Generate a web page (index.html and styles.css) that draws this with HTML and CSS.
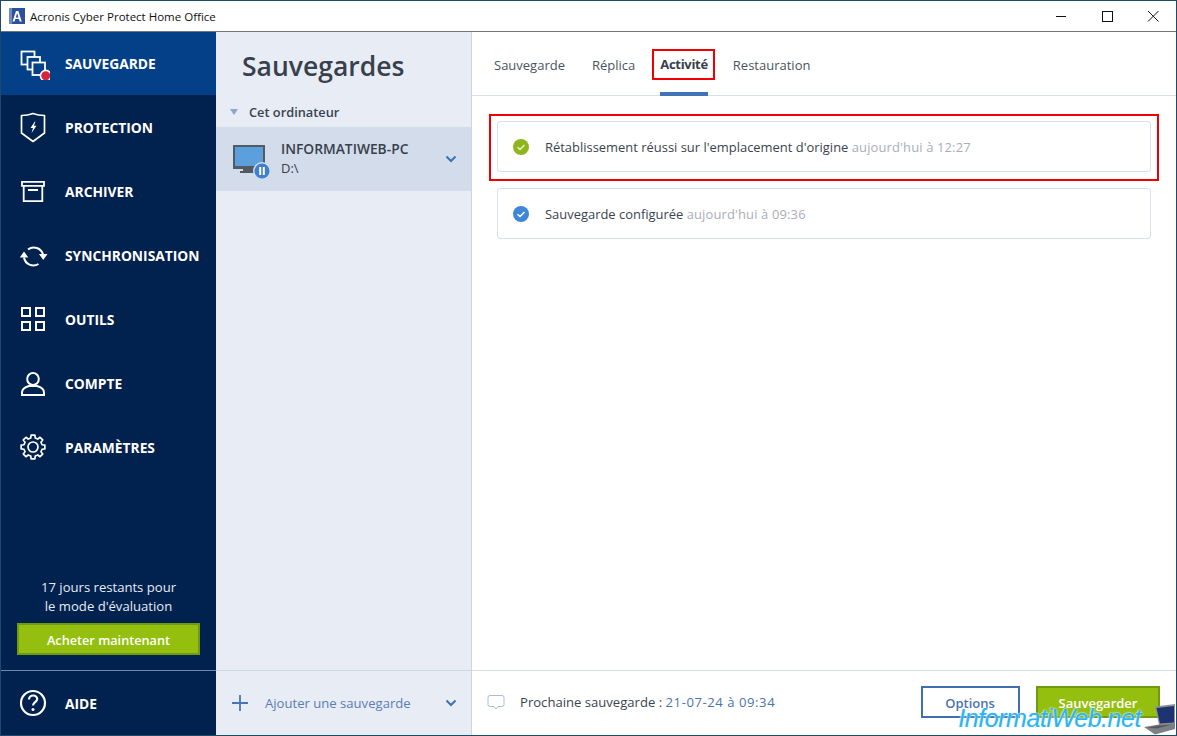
FILE: index.html
```html
<!DOCTYPE html>
<html lang="fr">
<head>
<meta charset="utf-8">
<title>Acronis Cyber Protect Home Office</title>
<link rel="stylesheet" href="styles.css">
</head>
<body>
<div class="window">
  <header class="titlebar">
    <svg class="app-logo" width="16" height="16" viewBox="0 0 16 16"><rect width="16" height="16" fill="#2c4f9e"/><rect x="0" y="0" width="3" height="16" fill="#6f8cc9"/><path d="M3.500 13.500 7 3h2.400l3.300 10.500h-2l-.7-2.400H6.300l-.7 2.400zM6.800 9.500h2.700L8.200 5z" fill="#fff"/></svg>
    <span class="app-title">Acronis Cyber Protect Home Office</span>
    <div class="win-controls">
      <svg class="win-btn" width="46" height="30" viewBox="0 0 46 30"><path d="M18 15.500h10" stroke="#111" fill="none"/></svg>
      <svg class="win-btn" width="46" height="30" viewBox="0 0 46 30"><rect x="18.500" y="10.500" width="10" height="10" stroke="#111" fill="none"/></svg>
      <svg class="win-btn" width="46" height="30" viewBox="0 0 46 30"><path d="M18 10l10.500 10.500M28.500 10 18 20.500" stroke="#111" fill="none"/></svg>
    </div>
  </header>
  <div class="body">
    <nav class="sidebar">
      <a class="nav-item active">
        <svg class="nav-icon" width="34" height="34" viewBox="0 0 34 34" fill="#034087" stroke="#fff" stroke-width="1.800"><rect x="5.500" y="5.500" width="13" height="13"/><rect x="11.500" y="11" width="12.500" height="12.500"/><rect x="16.500" y="16.500" width="12.500" height="12.500"/><circle cx="29.700" cy="29.700" r="5.300" fill="#d6263f" stroke="#fff" stroke-width="1.600"/></svg>
        <span>SAUVEGARDE</span>
      </a>
      <a class="nav-item">
        <svg class="nav-icon" width="34" height="34" viewBox="0 0 34 34" fill="none" stroke="#fff" stroke-width="1.700"><path d="M5.500 5.500c4.500 0 8.500-.8 11.500-2 3 1.200 7 2 11.500 2v17.500L17 31.500 5.500 23z" stroke-linejoin="round"/><path d="M18.800 11.500 14.500 18h2.500l-1.500 5 5-7.200h-2.600l1.500-4.300z" fill="#fff" stroke="none"/></svg>
        <span>PROTECTION</span>
      </a>
      <a class="nav-item">
        <svg class="nav-icon" width="34" height="34" viewBox="0 0 34 34" fill="none" stroke="#fff" stroke-width="1.800"><path d="M6 7.900h22v4H6zM7.700 11.900v15.200h18.600V11.900M12 16h10"/></svg>
        <span>ARCHIVER</span>
      </a>
      <a class="nav-item">
        <svg class="nav-icon" width="34" height="34" viewBox="0 0 34 34" fill="none" stroke="#fff" stroke-width="2"><path d="M12 11.500A9.500 9.500 0 0 1 27 16.500"/><path d="M8 19.500A9.500 9.500 0 0 0 22.500 26"/><path d="M23 16h8.500l-4.250 6zM3.800 19.500h8.500L8 13.500z" fill="#fff" stroke="none"/></svg>
        <span>SYNCHRONISATION</span>
      </a>
      <a class="nav-item">
        <svg class="nav-icon" width="34" height="34" viewBox="0 0 34 34" fill="none" stroke="#fff" stroke-width="2"><rect x="6" y="6" width="8" height="8"/><rect x="20" y="6" width="8" height="8"/><rect x="6" y="20" width="8" height="8"/><rect x="20" y="20" width="8" height="8"/></svg>
        <span>OUTILS</span>
      </a>
      <a class="nav-item">
        <svg class="nav-icon" width="34" height="34" viewBox="0 0 34 34" fill="none" stroke="#fff" stroke-width="2"><ellipse cx="17" cy="13" rx="5.800" ry="6"/><path d="M6 29v-2.500c0-3 3.500-5.500 7-6.500h8c3.500 1 7 3.500 7 6.500V29z"/></svg>
        <span>COMPTE</span>
      </a>
      <a class="nav-item">
        <svg class="nav-icon" width="34" height="34" viewBox="0 0 34 34" fill="none" stroke="#fff" stroke-width="1.700" stroke-linejoin="round"><path d="M14.750 7.980 15.120 5.150H18.880L19.250 7.980 21.790 9.030 24.050 7.290 26.710 9.950 24.970 12.210 26.020 14.750 28.850 15.120V18.880L26.020 19.250 24.970 21.790 26.710 24.050 24.050 26.710 21.790 24.970 19.250 26.020 18.880 28.850H15.120L14.750 26.020 12.210 24.970 9.950 26.710 7.290 24.050 9.030 21.790 7.980 19.250 5.150 18.880V15.120L7.980 14.750 9.030 12.210 7.290 9.950 9.950 7.290 12.210 9.030z"/><circle cx="17" cy="17" r="5"/></svg>
        <span>PARAMÈTRES</span>
      </a>
      <div class="trial">
        <p class="trial-text">17 jours restants pour<br>le mode d'évaluation</p>
        <button class="buy">Acheter maintenant</button>
      </div>
      <a class="nav-item help">
        <svg class="nav-icon" width="34" height="34" viewBox="0 0 34 34" fill="none" stroke="#fff" stroke-width="2.200"><circle cx="17" cy="17" r="12"/><path d="M13 13.500c0-2.500 2-4 4.200-4s4 1.500 4 3.600c0 3-4.200 3.200-4.200 6.400"/><circle cx="17" cy="23.500" r="1.500" fill="#fff" stroke="none"/></svg>
        <span>AIDE</span>
      </a>
    </nav>
    <section class="panel">
      <h1 class="panel-title">Sauvegardes</h1>
      <div class="group"><i class="caret"></i>Cet ordinateur</div>
      <div class="backup-row">
        <svg class="pc" width="38" height="38" viewBox="0 0 38 38"><rect x="1" y="2" width="32" height="24" fill="#545a62"/><rect x="3" y="4" width="28" height="19" fill="#5b9fdc"/><rect x="11" y="26" width="12" height="2" fill="#545a62"/><rect x="8" y="28" width="18" height="2" fill="#545a62"/><circle cx="30" cy="28" r="9" fill="#d2dcea"/><circle cx="30" cy="28" r="7.500" fill="#3f80d0"/><rect x="27.200" y="24" width="2" height="8" fill="#fff"/><rect x="30.800" y="24" width="2" height="8" fill="#fff"/></svg>
        <div class="backup-text">
          <div class="backup-name">INFORMATIWEB-PC</div>
          <div class="backup-path">D:\</div>
        </div>
        <svg class="chev" width="12" height="8" viewBox="0 0 12 8"><path d="M1.500 1.500 6 6l4.500-4.500" fill="none" stroke="#3f6fb5" stroke-width="2"/></svg>
      </div>
      <div class="panel-foot">
        <svg class="plus" width="16" height="16" viewBox="0 0 16 16"><path d="M8 0v16M0 8h16" stroke="#4a74b8" stroke-width="1.800"/></svg>
        <span class="add-label">Ajouter une sauvegarde</span>
        <svg class="chev" width="12" height="8" viewBox="0 0 12 8"><path d="M1.500 1.500 6 6l4.500-4.500" fill="none" stroke="#3f6fb5" stroke-width="2"/></svg>
      </div>
    </section>
    <main class="main">
      <div class="tabs">
        <a class="tab tab-first">Sauvegarde</a>
        <a class="tab tab-replica">Réplica</a>
        <a class="tab current">Activité<b class="mark-tab"></b></a>
        <a class="tab">Restauration</a>
      </div>
      <div class="activity">
        <div class="card highlighted">
          <svg class="status" width="16" height="16" viewBox="0 0 16 16"><circle cx="8" cy="8" r="8" fill="#8fb51c"/><path d="M4.500 8.200 7 10.500l4.500-4.500" fill="none" stroke="#e8f2c8" stroke-width="1.500"/></svg>
          <span class="msg">Rétablissement réussi sur l'emplacement d'origine <span class="when">aujourd'hui à 12:27</span></span>
        </div>
        <div class="card">
          <svg class="status" width="16" height="16" viewBox="0 0 16 16"><circle cx="8" cy="8" r="8" fill="#3f86d8"/><path d="M4.500 8.200 7 10.500l4.500-4.500" fill="none" stroke="#fff" stroke-width="1.500"/></svg>
          <span class="msg">Sauvegarde configurée <span class="when">aujourd'hui à 09:36</span></span>
        </div>
      </div>
      <footer class="main-foot">
        <svg class="bubble" width="18" height="17" viewBox="0 0 18 17"><path d="M3 1.500h12a2 2 0 0 1 2 2v7a2 2 0 0 1-2 2h-4l-2 2.500-2-2.500H3a2 2 0 0 1-2-2v-7a2 2 0 0 1 2-2z" fill="none" stroke="#a9bcd8"/></svg>
        <span class="next">Prochaine sauvegarde : <span class="next-date">21-07-24 à 09:34</span></span>
        <button class="btn-options">Options</button>
        <button class="btn-save">Sauvegarder</button>
      </footer>
    </main>
  </div>
  <div class="watermark">
    <span class="wm-text">InformatiWeb.net</span>
    <svg class="wm-laptop" width="32" height="31" viewBox="0 0 32 31"><path d="M11 2.500 31 0v20l-16 1z" fill="#8d9297"/><path d="M12.500 4 30 2v16.500L16 19.500z" fill="#1d3470"/><path d="M0 23 15 20.500 31 19.500V25L11 30.500z" fill="#7b8085"/><path d="M3 23.500 15 21.500l13-1-15 4z" fill="#55595e"/></svg>
  </div>
</div>
</body>
</html>
```
FILE: styles.css
```css
* { box-sizing: border-box; }
html, body { margin: 0; height: 100%; }
body { font-family: "Open Sans", "Noto Sans", sans-serif; color: #2b3440; background: #fff; overflow: hidden; }
.window { position: relative; width: 1177px; height: 736px; display: flex; flex-direction: column; border: 1px solid #1c4a6b; }
.titlebar { height: 31px; flex: none; display: flex; align-items: center; padding-left: 8px; background: #fff; border-bottom: 1px solid #6f7478; }
.app-logo { flex: none; }
.app-title { margin-left: 5px; font-size: 11.500px; color: #111; }
.win-controls { margin-left: auto; display: flex; }
.win-btn { display: block; }
.body { flex: 1; display: flex; min-height: 0; }
.sidebar { width: 215px; flex: none; background: #01214f; color: #fff; display: flex; flex-direction: column; }
.nav-item { height: 64px; flex: none; display: flex; align-items: center; padding-left: 15px; font-size: 13.800px; font-weight: 700; }
.nav-item span { margin-left: 15px; }
.nav-icon { flex: none; }
.nav-item.active { height: 63px; padding-bottom: 1px; background: #034087; }
.trial { margin-top: auto; padding: 0 16px 15px; text-align: center; }
.trial-text { margin: 0 0 7px; font-size: 13.100px; line-height: 19px; color: #e6ecf5; }
.buy { width: 183px; height: 32px; background: #95bf0e; border: 2px solid #6f9a12; color: #fff; font: 600 12.700px "Open Sans", sans-serif; padding: 1px 0 0; }
.nav-item.help { border-top: 1px solid #6d86ae; height: 65px; }
.panel { width: 256px; flex: none; background: #e7ecf5; border-right: 1px solid #cdd6e3; display: flex; flex-direction: column; }
.panel-title { margin: 15px 0 0 26px; font-size: 26.500px; line-height: 38px; font-weight: 600; color: #37404c; }
.group { margin-top: 16px; height: 22px; display: flex; align-items: center; padding-left: 14px; font-size: 12.800px; font-weight: 600; color: #3a4450; }
.caret { width: 0; height: 0; border: 4.500px solid transparent; border-top: 6px solid #8ea5cb; border-bottom: 0; margin-right: 11px; }
.backup-row { margin-top: 4px; height: 64px; background: #d2dcea; display: flex; align-items: center; padding: 0 14px 0 16px; }
.pc { flex: none; margin-top: 6px; }
.backup-text { margin-left: 11px; flex: 1; }
.backup-name { font-size: 13.800px; line-height: 19px; font-weight: 600; color: #37404c; margin-top: -1px; }
.backup-path { font-size: 13px; line-height: 20px; color: #37404c; }
.chev { flex: none; display: block; }
.panel-foot { margin-top: auto; height: 65px; border-top: 1px solid #cdd6e3; display: flex; align-items: center; padding: 0 14px 0 16px; }
.add-label { margin-left: 17px; flex: 1; font-size: 13.100px; color: #5b7db4; }
.main { flex: 1; display: flex; flex-direction: column; min-width: 0; }
.tabs { height: 64px; flex: none; display: flex; gap: 26px; padding: 0 0 0 22px; border-bottom: 1px solid #d7dfe9; }
.tab { position: relative; height: 64px; line-height: 66px; font-size: 13px; color: #4a5460; }
.tab-first { margin-right: 1px; }
.tab-replica { margin-right: -1px; }
.tab.current { font-weight: 700; color: #37404c; letter-spacing: -.3px; border-bottom: 4px solid #4272b6; line-height: 65px; margin-right: -1px; }
.mark-tab { position: absolute; left: -8px; right: -7px; top: 17px; height: 31px; border: 2px solid #f00000; }
.activity { flex: 1; display: flex; flex-direction: column; gap: 16px; padding: 25px 25px 0 25px; }
.card { height: 51px; background: #fff; border: 1px solid #d7dfe9; border-radius: 3px; display: flex; align-items: center; padding-left: 15px; position: relative; }
.card.highlighted::after { content: ""; position: absolute; inset: -8px -9px -10px -9px; border: 2px solid #f00000; }
.status { flex: none; }
.msg { margin-left: 16px; font-size: 12.950px; color: #3a4450; }
.when { color: #a9aeb6; letter-spacing: .15px; }
.main-foot { height: 65px; flex: none; border-top: 1px solid #d7dfe9; display: flex; align-items: center; padding: 0 16px 2px 15px; }
.bubble { flex: none; }
.next { margin-left: 15px; flex: 1; font-size: 13.100px; color: #3a4450; }
.next-date { color: #4a74b0; letter-spacing: .55px; }
.btn-options { width: 99px; height: 32px; background: #fff; border: 2px solid #3f6fae; color: #4a74b0; font: 600 13px "Open Sans", sans-serif; padding: 1px 1px 0 0; }
.btn-save { width: 124px; height: 32px; margin-left: 16px; background: #95bf0e; border: 2px solid #6f9a12; color: #fff; font: 600 13px "Open Sans", sans-serif; padding: 1px 0 0; }
.watermark { position: absolute; right: 0; bottom: 0; display: flex; align-items: flex-end; }
.wm-text { font: italic 400 25px "Liberation Sans", sans-serif; letter-spacing: -.45px; color: #2db2f2; text-shadow: 0 0 2px #d8f4ff, 0 0 2px #d8f4ff; margin-bottom: 2px; margin-right: 3px; }
.wm-laptop { display: block; }
```
